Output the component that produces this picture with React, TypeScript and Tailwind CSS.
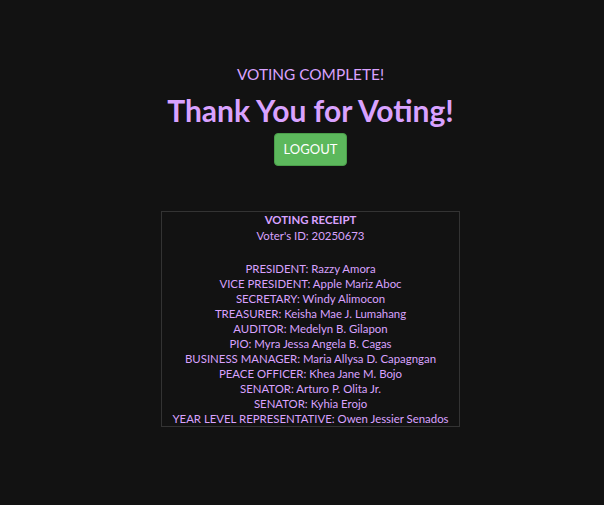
export default function App() {
  const votes = [
    ["PRESIDENT", "Razzy Amora"],
    ["VICE PRESIDENT", "Apple Mariz Aboc"],
    ["SECRETARY", "Windy Alimocon"],
    ["TREASURER", "Keisha Mae J. Lumahang"],
    ["AUDITOR", "Medelyn B. Gilapon"],
    ["PIO", "Myra Jessa Angela B. Cagas"],
    ["BUSINESS MANAGER", "Maria Allysa D. Capagngan"],
    ["PEACE OFFICER", "Khea Jane M. Bojo"],
    ["SENATOR", "Arturo P. Olita Jr."],
    ["SENATOR", "Kyhia Erojo"],
    ["YEAR LEVEL REPRESENTATIVE", "Owen Jessier Senados"],
  ];

  return (
    <div className="min-h-[505px] bg-[#121212] pl-[17px] pt-[64px] font-['Lato',sans-serif] text-[#d9a2ff]">
      <div className="flex flex-col items-center">
        <h2 className="text-[15.4px] leading-[20px]">VOTING COMPLETE!</h2>
        <h1 className="mt-[8px] text-[30px] font-bold leading-[36px]">Thank You for Voting!</h1>
        <button className="mt-[5px] h-[33px] w-[73px] rounded-[4px] border border-[#4a9e4a] bg-[#5cb85c] text-[13px] text-white">
          LOGOUT
        </button>

        {/* Receipt */}
        <div className="mt-[45px] w-[299px] border border-[#333] text-center text-[11.4px] leading-[15px]">
          <div className="font-bold leading-[16px]">VOTING RECEIPT</div>
          <div>Voter's ID: 20250673</div>
          <div className="h-[18px]" />
          {votes.map(([pos, name], i) => (
            <div key={i}>
              {pos}: {name}
            </div>
          ))}
        </div>
      </div>
    </div>
  );
}
